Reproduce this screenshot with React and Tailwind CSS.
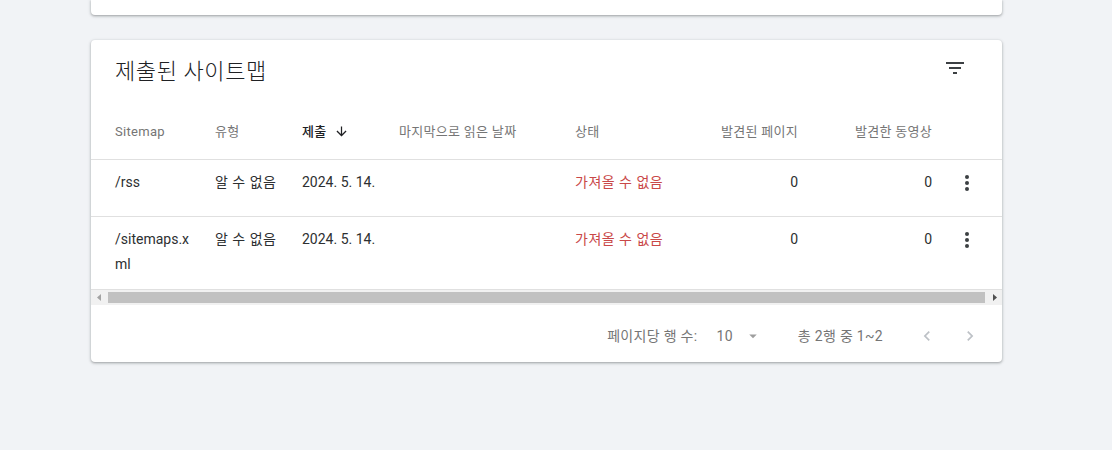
import React from "react";

const font = { fontFamily: "Roboto, 'Noto Sans CJK KR', 'Noto Sans', sans-serif" };

const rows = [
    { path: "/rss", type: "알 수 없음", date: "2024. 5. 14.", status: "가져올 수 없음", pages: 0, videos: 0 },
    { path: "/sitemaps.xml", type: "알 수 없음", date: "2024. 5. 14.", status: "가져올 수 없음", pages: 0, videos: 0 },
];

function Kebab() {
    return (
        <svg width="24" height="24" viewBox="0 0 24 24" fill="#3c4043">
            <circle cx="12" cy="6" r="2" />
            <circle cx="12" cy="12" r="2" />
            <circle cx="12" cy="18" r="2" />
        </svg>
    );
}

export default function App() {
    return (
        <div className="min-h-screen w-full bg-[#f1f3f6] pb-10" style={font}>

            {/* previous card, bottom edge only */}
            <div className="ml-[91px] w-[911px] h-[15px] bg-white rounded-b shadow-[0_1px_2px_rgba(60,64,67,0.3),0_1px_3px_1px_rgba(60,64,67,0.15)]" />

            {/* sitemaps card */}
            <div className="ml-[91px] mt-[25px] w-[911px] bg-white rounded shadow-[0_1px_2px_rgba(60,64,67,0.3),0_1px_3px_1px_rgba(60,64,67,0.15)] overflow-hidden">

                {/* title */}
                <div className="flex items-start justify-between h-[60px] pl-6 pr-[35px]">
                    <h2 className="pt-[18px] text-[22px] leading-[28px] tracking-[0.6px] text-[#202124] font-light">제출된 사이트맵</h2>
                    <svg className="mt-[16px]" width="24" height="24" viewBox="0 0 24 24" fill="#3c4043">
                        <path d="M10 18h4v-2h-4v2zM3 6v2h18V6H3zm3 7h12v-2H6v2z" />
                    </svg>
                </div>

                {/* header */}
                <div className="flex items-center h-[60px] pt-[4px] border-b border-[#e0e0e0] text-[13px] tracking-[0.3px] text-[#757575]">
                    <div className="w-[124px] shrink-0 pl-6">Sitemap</div>
                    <div className="w-[87px] shrink-0">유형</div>
                    <div className="w-[97px] shrink-0 flex items-center gap-[7px] text-[#202124] font-medium">
                        제출
                        <svg width="15" height="15" viewBox="0 0 24 24" fill="#202124">
                            <path d="M20 12l-1.41-1.41L13 16.17V4h-2v12.17l-5.58-5.59L4 12l8 8 8-8z" />
                        </svg>
                    </div>
                    <div className="w-[176px] shrink-0">마지막으로 읽은 날짜</div>
                    <div className="w-[125px] shrink-0">상태</div>
                    <div className="w-[114px] shrink-0 pr-4 text-right">발견된 페이지</div>
                    <div className="w-[134px] shrink-0 pr-4 text-right">발견한 동영상</div>
                    <div className="w-[54px] shrink-0" />
                </div>

                {/* rows */}
                {rows.map((r, i) => (
                    <div
                        key={i}
                        className="flex items-start min-h-[57px] pt-[10px] pb-3 border-b border-[#e0e0e0] text-[14px] leading-[25px] text-[#2d2f31]"
                    >
                        <div className="w-[124px] shrink-0 pl-6 pr-4 break-all">{r.path}</div>
                        <div className="w-[87px] shrink-0 tracking-[0.5px]">{r.type}</div>
                        <div className="w-[97px] shrink-0">{r.date}</div>
                        <div className="w-[176px] shrink-0" />
                        <div className="w-[125px] shrink-0 tracking-[0.5px] text-[#c94848]">{r.status}</div>
                        <div className="w-[114px] shrink-0 pr-4 text-right">{r.pages}</div>
                        <div className="w-[134px] shrink-0 pr-4 text-right">{r.videos}</div>
                        <div className="w-[54px] shrink-0 pl-[7px] h-[25px] flex items-center">
                            <Kebab />
                        </div>
                    </div>
                ))}

                {/* fake horizontal scrollbar */}
                <div className="flex items-center h-[15px] bg-[#f1f1f1]">
                    <div className="w-[15px] h-[15px] flex items-center justify-center">
                        <svg width="4" height="7" viewBox="0 0 4 7" fill="#a3a3a3"><path d="M4 0v7L0 3.5z" /></svg>
                    </div>
                    <div className="flex-1 h-[11px] mx-[2px] bg-[#c1c1c1]" />
                    <div className="w-[15px] h-[15px] flex items-center justify-center">
                        <svg width="4" height="7" viewBox="0 0 4 7" fill="#505050"><path d="M0 0v7l4-3.5z" /></svg>
                    </div>
                </div>

                {/* pagination */}
                <div className="flex items-center justify-end h-[57px] pt-[5px] pr-[18px] text-[14px] tracking-[0.3px] text-[#757575]">
                    <span>페이지당 행 수:</span>
                    <span className="ml-[19px]">10</span>
                    <svg className="ml-[11px]" width="18" height="18" viewBox="0 0 24 24" fill="#9e9e9e">
                        <path d="M7 10l5 5 5-5z" />
                    </svg>
                    <span className="ml-[36px]">총 2행 중 1~2</span>
                    <div className="ml-[30px] w-[28px] h-[28px] flex items-center justify-center">
                        <svg width="20" height="20" viewBox="0 0 24 24" fill="#bdc1c6">
                            <path d="M15.41 7.41L14 6l-6 6 6 6 1.41-1.41L10.83 12z" />
                        </svg>
                    </div>
                    <div className="ml-[15px] w-[28px] h-[28px] flex items-center justify-center">
                        <svg width="20" height="20" viewBox="0 0 24 24" fill="#bdc1c6">
                            <path d="M10 6L8.59 7.41 13.17 12l-4.58 4.59L10 18l6-6z" />
                        </svg>
                    </div>
                </div>
            </div>
        </div>
    );
}
